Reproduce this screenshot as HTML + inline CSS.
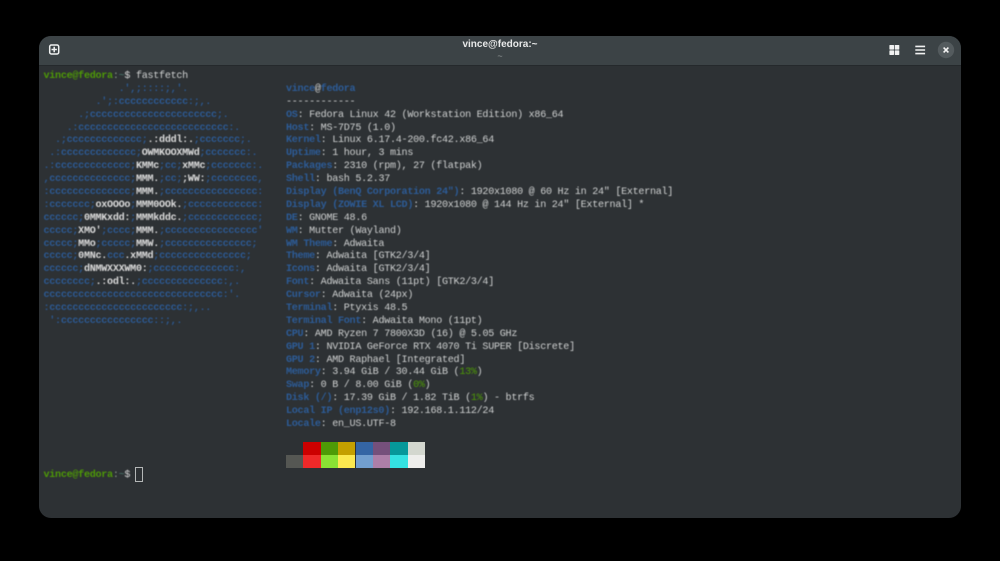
<!DOCTYPE html>
<html><head><meta charset="utf-8"><style>
html,body{margin:0;padding:0;width:1000px;height:561px;overflow:hidden;background:#000}
#win{position:absolute;left:39px;top:36px;width:922px;height:482px;border-radius:12px;background:#2d3134;overflow:hidden}
#bar{position:absolute;left:0;top:0;width:922px;height:29px;background:#3c4346;border-bottom:1px solid #25292c}
#t1{position:absolute;left:0;width:922px;top:2px;text-align:center;font:bold 10px/14px "Liberation Sans",sans-serif;color:#e8e9e9;filter:blur(.25px)}
#t2{position:absolute;left:0;width:922px;top:14px;text-align:center;font:9px/12px "Liberation Sans",sans-serif;color:#8f9495;filter:blur(.3px)}
pre{position:absolute;margin:0;font-family:"Liberation Mono",monospace;font-size:10.1px;letter-spacing:-.28px;line-height:12.885px;color:#d0d2d2;filter:blur(.4px)}
.g{color:#4e9a06;font-weight:bold}
.l{color:#2d5c98;font-weight:bold}
.d{color:#2c5a94;font-weight:bold}
.w{color:#dcdcdc;font-weight:bold}
.p{color:#4e9a06}
.s{position:absolute;width:17.4px;height:13px}
</style></head><body>
<div id="win">
<div id="bar">
<div id="t1">vince@fedora:~</div>
<div id="t2">~</div>
</div>
<svg style="position:absolute;left:0;top:0" width="922" height="30" viewBox="0 0 922 30" fill="none">
<rect x="10.7" y="9" width="9" height="9" rx="1.6" stroke="#f0f1f1" stroke-width="1.5"/>
<path d="M15.2 10.8v5.4M12.5 13.5h5.4" stroke="#f0f1f1" stroke-width="1.5"/>
<rect x="850.4" y="9" width="4.6" height="4.6" rx=".6" fill="#f0f1f1"/><rect x="855.7" y="9" width="4.6" height="4.6" rx=".6" fill="#f0f1f1"/>
<rect x="850.4" y="14.4" width="4.6" height="4.6" rx=".6" fill="#f0f1f1"/><rect x="855.7" y="14.4" width="4.6" height="4.6" rx=".6" fill="#f0f1f1"/>
<path d="M876.3 10.4h9.8M876.3 14h9.8M876.3 17.6h9.8" stroke="#f0f1f1" stroke-width="1.6"/>
<circle cx="907" cy="14" r="8.2" fill="#545b5e"/>
<path d="M904.6 11.6l4.8 4.8M909.4 11.6l-4.8 4.8" stroke="#f4f4f4" stroke-width="1.6"/>
</svg>
</div>
<pre style="left:43.5px;top:71px"><span class="g">vince@fedora</span><span style="color:#8a9a8a">:</span><span style="color:#4a7a70">~</span><span style="color:#d8d8d8">$</span> fastfetch
<span class="d">             .',;::::;,'.
         .';:cccccccccccc:;,.
      .;cccccccccccccccccccccc;.
    .:cccccccccccccccccccccccccc:.
  .;ccccccccccccc;</span><span class="w">.:dddl:.</span><span class="d">;ccccccc;.
 .:ccccccccccccc;</span><span class="w">OWMKOOXMWd</span><span class="d">;ccccccc:.
.:ccccccccccccc;</span><span class="w">KMMc</span><span class="d">;cc;</span><span class="w">xMMc</span><span class="d">;ccccccc:.
,cccccccccccccc;</span><span class="w">MMM.</span><span class="d">;cc;</span><span class="w">;WW:</span><span class="d">;cccccccc,
:cccccccccccccc;</span><span class="w">MMM.</span><span class="d">;cccccccccccccccc:
:ccccccc;</span><span class="w">oxOOOo</span><span class="d">;</span><span class="w">MMM0OOk.</span><span class="d">;cccccccccccc:
cccccc;</span><span class="w">0MMKxdd:</span><span class="d">;</span><span class="w">MMMkddc.</span><span class="d">;cccccccccccc;
ccccc;</span><span class="w">XMO'</span><span class="d">;cccc;</span><span class="w">MMM.</span><span class="d">;cccccccccccccccc'
ccccc;</span><span class="w">MMo</span><span class="d">;ccccc;</span><span class="w">MMW.</span><span class="d">;ccccccccccccccc;
ccccc;</span><span class="w">0MNc.</span><span class="d">ccc</span><span class="w">.xMMd</span><span class="d">;ccccccccccccccc;
cccccc;</span><span class="w">dNMWXXXWM0:</span><span class="d">;cccccccccccccc:,
cccccccc;</span><span class="w">.:odl:.</span><span class="d">;cccccccccccccc:,.
ccccccccccccccccccccccccccccccc:'.
:ccccccccccccccccccccccc:;,..
 ':cccccccccccccccc::;,.</span></pre>
<pre style="left:286px;top:83.9px"><span class="l">vince</span>@<span class="l">fedora</span>
------------
<span class="l">OS</span>: Fedora Linux 42 (Workstation Edition) x86_64
<span class="l">Host</span>: MS-7D75 (1.0)
<span class="l">Kernel</span>: Linux 6.17.4-200.fc42.x86_64
<span class="l">Uptime</span>: 1 hour, 3 mins
<span class="l">Packages</span>: 2310 (rpm), 27 (flatpak)
<span class="l">Shell</span>: bash 5.2.37
<span class="l">Display (BenQ Corporation 24")</span>: 1920x1080 @ 60 Hz in 24" [External]
<span class="l">Display (ZOWIE XL LCD)</span>: 1920x1080 @ 144 Hz in 24" [External] *
<span class="l">DE</span>: GNOME 48.6
<span class="l">WM</span>: Mutter (Wayland)
<span class="l">WM Theme</span>: Adwaita
<span class="l">Theme</span>: Adwaita [GTK2/3/4]
<span class="l">Icons</span>: Adwaita [GTK2/3/4]
<span class="l">Font</span>: Adwaita Sans (11pt) [GTK2/3/4]
<span class="l">Cursor</span>: Adwaita (24px)
<span class="l">Terminal</span>: Ptyxis 48.5
<span class="l">Terminal Font</span>: Adwaita Mono (11pt)
<span class="l">CPU</span>: AMD Ryzen 7 7800X3D (16) @ 5.05 GHz
<span class="l">GPU 1</span>: NVIDIA GeForce RTX 4070 Ti SUPER [Discrete]
<span class="l">GPU 2</span>: AMD Raphael [Integrated]
<span class="l">Memory</span>: 3.94 GiB / 30.44 GiB (<span class="p">13%</span>)
<span class="l">Swap</span>: 0 B / 8.00 GiB (<span class="p">0%</span>)
<span class="l">Disk (/)</span>: 17.39 GiB / 1.82 TiB (<span class="p">1%</span>) - btrfs
<span class="l">Local IP (enp12s0)</span>: 192.168.1.112/24
<span class="l">Locale</span>: en_US.UTF-8</pre>
<div class="s" style="left:303.4px;top:442px;background:#cc0000"></div>
<div class="s" style="left:320.8px;top:442px;background:#4e9a06"></div>
<div class="s" style="left:338.1px;top:442px;background:#c4a000"></div>
<div class="s" style="left:355.5px;top:442px;background:#3465a4"></div>
<div class="s" style="left:372.9px;top:442px;background:#75507b"></div>
<div class="s" style="left:390.2px;top:442px;background:#06989a"></div>
<div class="s" style="left:407.6px;top:442px;background:#d3d7cf"></div>
<div class="s" style="left:286px;top:455px;background:#555753"></div>
<div class="s" style="left:303.4px;top:455px;background:#ef2929"></div>
<div class="s" style="left:320.8px;top:455px;background:#8ae234"></div>
<div class="s" style="left:338.1px;top:455px;background:#fce94f"></div>
<div class="s" style="left:355.5px;top:455px;background:#729fcf"></div>
<div class="s" style="left:372.9px;top:455px;background:#ad7fa8"></div>
<div class="s" style="left:390.2px;top:455px;background:#34e2e2"></div>
<div class="s" style="left:407.6px;top:455px;background:#eeeeec"></div>
<pre style="left:43.5px;top:470.4px"><span class="g">vince@fedora</span><span style="color:#8a9a8a">:</span><span style="color:#4a7a70">~</span><span style="color:#d8d8d8">$</span></pre>
<div style="position:absolute;left:135px;top:467px;width:6px;height:13px;border:1px solid #b4b7b7"></div>
</body></html>
